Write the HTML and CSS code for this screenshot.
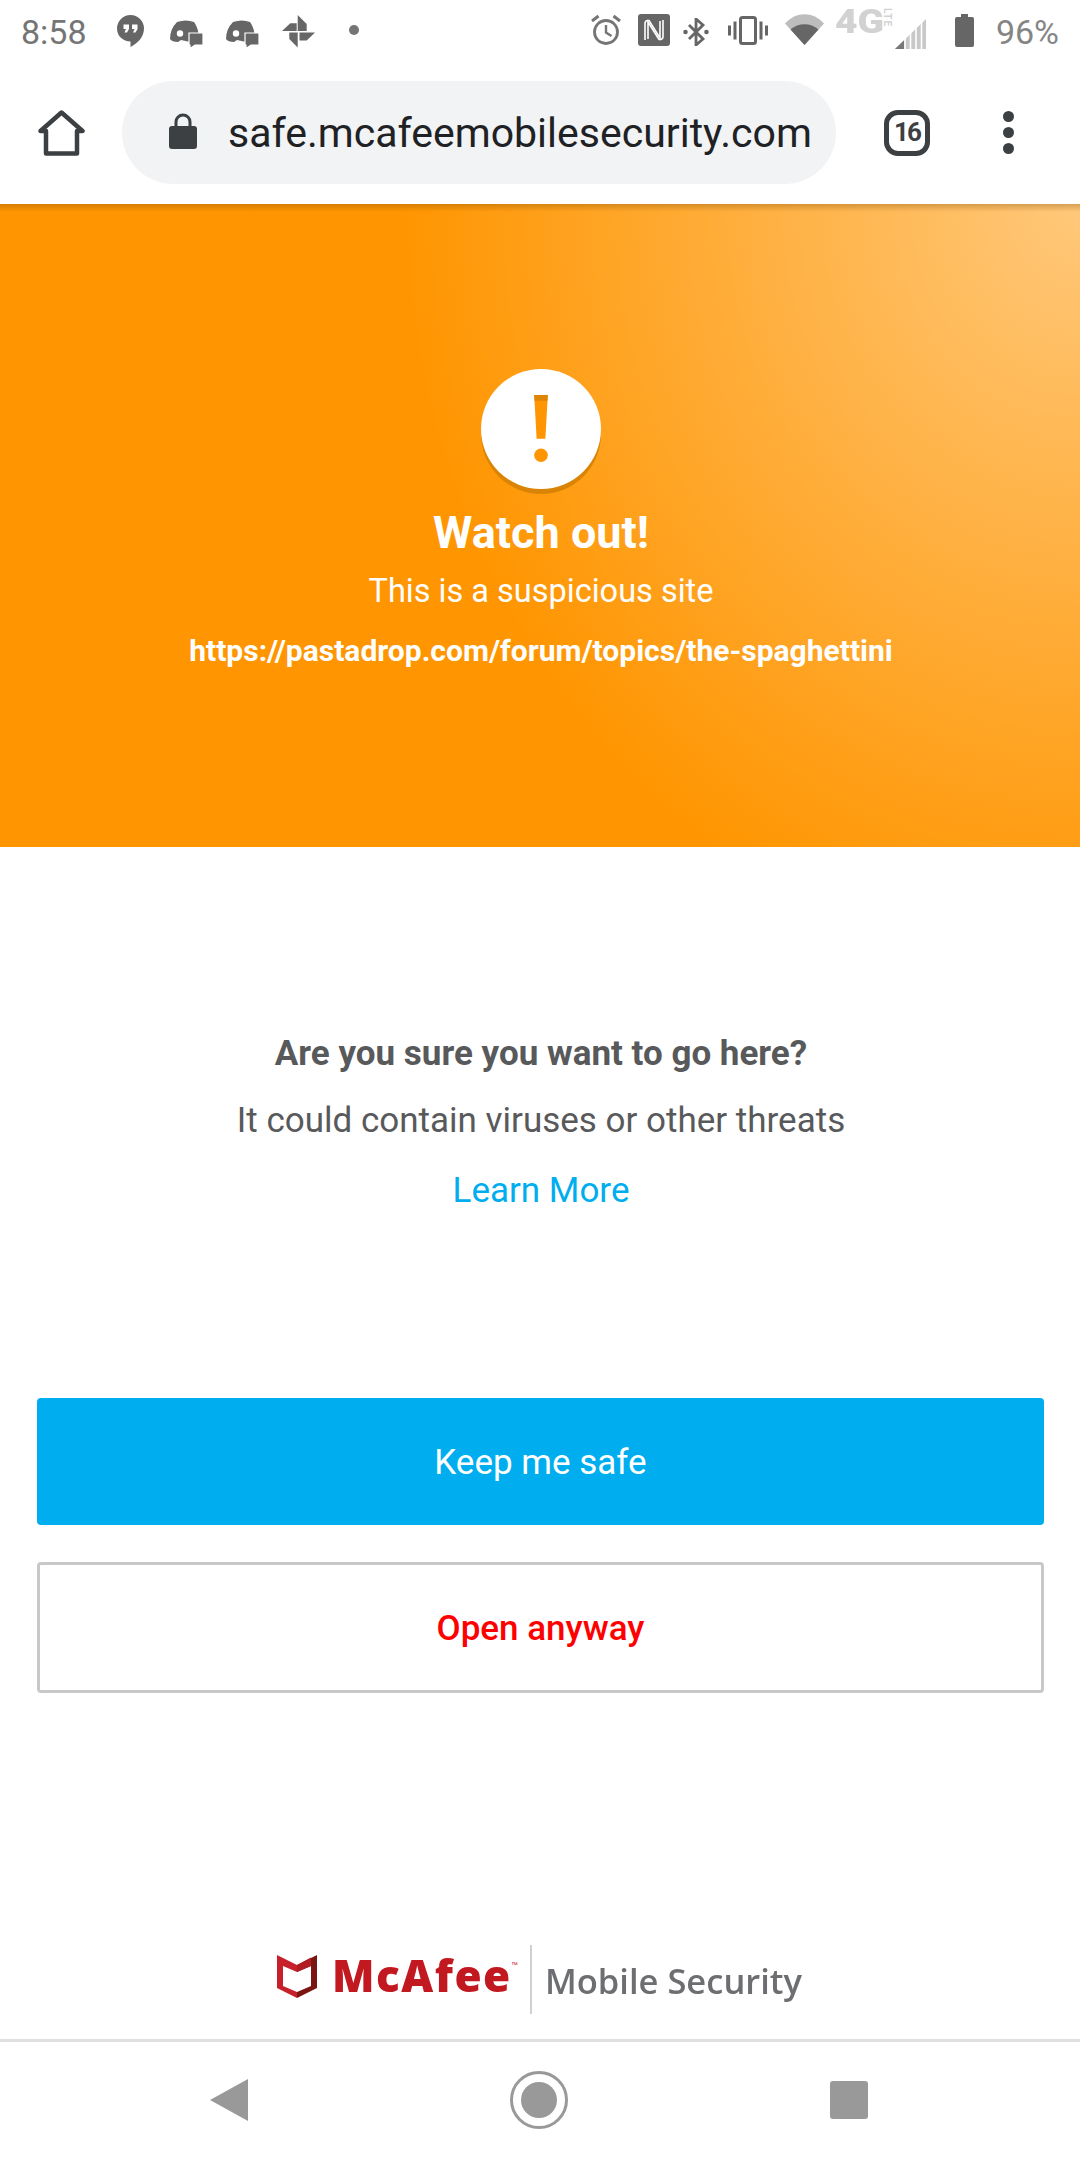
FILE: index.html
```html
<!DOCTYPE html>
<html lang="en">
<head>
    <meta charset="UTF-8">
    <meta name="viewport" content="width=device-width, initial-scale=1.0">
    <title>McAfee Mobile Security</title>
    <link rel="stylesheet" href="styles.css">
</head>
<body>
    <div class="status-bar">
        <span class="clock">8:58</span>
        <div class="notif-icons">
            <svg class="ic-hangouts" viewBox="0 0 27 32"><path d="M13.500 0a13.500 13.500 0 0 0-13.500 13.500c0 7.500 6 13 13.500 13V32c7-3.500 13.500-10 13.500-18.500A13.500 13.500 0 0 0 13.500 0z" fill="#666"/><path d="M6.500 9.500h5.500v4.500l-2 3.500H7.500l1.500-3.500H6.500zM15 9.500h5.500v4.500l-2 3.500H16l1.500-3.500H15z" fill="#fff"/></svg>
            <svg class="ic-discord" viewBox="0 0 33 28"><path d="M7 2Q16-1 24 2q3 4 4.500 11H20v9l-9-2-3 2q-6 0-8-3Q0 9 7 2z" fill="#666"/><circle cx="10" cy="13.500" r="3.200" fill="#fff"/><path d="M19 13h14v12h-8l-5 3.500V25h-1z" fill="#666" stroke="#fff" stroke-width="1.200"/></svg>
            <svg class="ic-discord" viewBox="0 0 33 28"><path d="M7 2Q16-1 24 2q3 4 4.500 11H20v9l-9-2-3 2q-6 0-8-3Q0 9 7 2z" fill="#666"/><circle cx="10" cy="13.500" r="3.200" fill="#fff"/><path d="M19 13h14v12h-8l-5 3.500V25h-1z" fill="#666" stroke="#fff" stroke-width="1.200"/></svg>
            <svg class="ic-pinwheel" viewBox="0 0 33 33"><path d="M15.700 0l9 9v7h-9zM17.500 17.500H33l-8.300 8h-7.200zM15.700 32.500l-8.400-8.500v-6.500h8.400zM0 16l8.300-7.700h6.400V16z" fill="#666"/></svg>
            <span class="notif-dot"></span>
        </div>
        <div class="system-icons">
            <svg class="ic-alarm" viewBox="0 0 30 32"><circle cx="15" cy="18" r="11.500" fill="none" stroke="#757575" stroke-width="2.800"/><path d="M15 11v7.500l5.500 3.500" fill="none" stroke="#757575" stroke-width="2.400"/><path d="M1 7l6.500-5M29 7l-6.500-5" stroke="#757575" stroke-width="3"/></svg>
            <svg class="ic-nfc" viewBox="0 0 32 32"><rect width="32" height="32" rx="3" fill="#666"/><path d="M7 26V9.500Q7 6.500 10 6.500h1L22 24V7" fill="none" stroke="#fff" stroke-width="1.600"/><path d="M25 6v16.500q0 3-3 3h-1L10 8v17" fill="none" stroke="#fff" stroke-width="1.600"/></svg>
            <svg class="ic-bt" viewBox="0 0 26 28"><path d="M6 7l14 14-7 6V1l7 6L6 21" fill="none" stroke="#666" stroke-width="2.800"/><circle cx="2.500" cy="14" r="2.300" fill="#666"/><circle cx="23.500" cy="14" r="2.300" fill="#666"/></svg>
            <svg class="ic-vibrate" viewBox="0 0 40 29"><rect x="12.500" y="1.500" width="15" height="26" rx="2" fill="none" stroke="#666" stroke-width="3"/><path d="M1.500 9.500v10M7 5.500v18M33 5.500v18M38.500 9.500v10" stroke="#666" stroke-width="3"/></svg>
            <svg class="ic-wifi" viewBox="0 0 39 31"><path d="M0 9.500C11-3 28-3 39 9.500L19.500 31z" fill="#bdbdbd"/><path d="M5.500 15.500c8-7 20-7 28 0L19.500 31z" fill="#666"/></svg>
            <div class="network">
                <span class="net-label">4G</span>
                <span class="net-lte">LTE</span>
                <svg class="ic-signal" viewBox="0 0 31 30"><path d="M0 30L31 0v30z" fill="#c8c8c8"/><path d="M0 30l9-8.700V30z" fill="#777"/><path d="M10 15v15M15.500 10v20M21 5v25M26.500 0v30" stroke="#fff" stroke-width="1.600"/></svg>
            </div>
            <svg class="ic-battery" viewBox="0 0 19 33"><path d="M6 0h7v3h4a2 2 0 0 1 2 2v26a2 2 0 0 1-2 2H2a2 2 0 0 1-2-2V5a2 2 0 0 1 2-2h4z" fill="#666"/></svg>
            <span class="battery-text">96%</span>
        </div>
    </div>

    <div class="toolbar">
        <svg class="ic-home" viewBox="0 0 47 46"><path d="M2.500 21L23.500 2.500 44.500 21H39v22.500H8V21z" fill="none" stroke="#3c4043" stroke-width="4.500" stroke-linejoin="round"/></svg>
        <div class="url-pill">
            <svg class="ic-lock" viewBox="0 0 28 36"><path d="M7 14V9a7 7 0 0 1 14 0v5" fill="none" stroke="#3c4043" stroke-width="3"/><rect y="13" width="28" height="23" rx="3" fill="#3c4043"/></svg>
            <span class="url-text">safe.mcafeemobilesecurity.com</span>
        </div>
        <div class="tab-count">16</div>
        <div class="menu-dots"><span></span><span></span><span></span></div>
    </div>

    <section class="hero">
        <div class="alert-circle">
            <svg class="ic-bang" viewBox="0 0 14 70"><path d="M0 0h14l-2.500 45h-9z" fill="#ff9500"/><path d="M0 0h14l-.3 6H.3z" fill="#de8504"/><circle cx="7" cy="62" r="7" fill="#ff9500"/></svg>
        </div>
        <h1>Watch out!</h1>
        <p class="hero-sub">This is a suspicious site</p>
        <p class="hero-url">https://pastadrop.com/forum/topics/the-spaghettini</p>
    </section>

    <main class="content">
        <h2>Are you sure you want to go here?</h2>
        <p class="warn">It could contain viruses or other threats</p>
        <a class="learn" href="#">Learn More</a>
    </main>

    <div class="actions">
        <button class="btn btn-safe">Keep me safe</button>
        <button class="btn btn-open">Open anyway</button>
    </div>

    <footer class="brand">
        <svg class="shield" viewBox="0 0 40 43"><path d="M0 0l20 10v7L6 11v20l14 6v6L0 33z" fill="#c8202a"/><path d="M40 0L20 10v7l14-6v20l-14 6v6l20-10z" fill="#7a1512"/><path d="M34 2.500L20 10v7l14-6z" fill="#b01c22"/></svg>
        <span class="brand-name">McAfee<sup>™</sup></span>
        <span class="brand-sep"></span>
        <span class="brand-product">Mobile Security</span>
    </footer>

    <nav class="nav-bar">
        <svg class="nav-back" viewBox="0 0 38 42"><path d="M38 0v42L0 21z" fill="#999"/></svg>
        <svg class="nav-home" viewBox="0 0 58 58"><circle cx="29" cy="29" r="27.500" fill="none" stroke="#999" stroke-width="3"/><circle cx="29" cy="29" r="18" fill="#999"/></svg>
        <span class="nav-recent"></span>
    </nav>
</body>
</html>
```

FILE: styles.css
```css
* {
    margin: 0;
    padding: 0;
    box-sizing: border-box;
}

body {
    width: 1080px;
    height: 2160px;
    overflow: hidden;
    font-family: 'Roboto', sans-serif;
    background-color: #ffffff;
    display: flex;
    flex-direction: column;
}

svg {
    display: block;
    flex-shrink: 0;
}

/* status bar */
.status-bar {
    height: 64px;
    display: flex;
    align-items: flex-start;
    padding: 0 21px;
    color: #757575;
}

.clock {
    font-size: 34px;
    line-height: 64px;
    width: 96px;
}

.notif-icons {
    display: flex;
    align-items: flex-start;
    padding-top: 15px;
}

.ic-hangouts { width: 27px; height: 32px; margin-right: 3px; }
.ic-discord { width: 33px; height: 28px; margin: 5px 0 0 23px; }
.ic-pinwheel { width: 33px; height: 33px; margin-left: 23px; }

.notif-dot {
    width: 10px;
    height: 10px;
    margin: 10px 0 0 34px;
    border-radius: 50%;
    background-color: #757575;
}

.system-icons {
    margin-left: auto;
    display: flex;
    align-items: flex-start;
}

.ic-alarm { width: 30px; height: 32px; margin-top: 14px; }
.ic-nfc { width: 32px; height: 32px; margin: 14px 0 0 17px; }
.ic-bt { width: 26px; height: 28px; margin: 18px 0 0 13px; }
.ic-vibrate { width: 40px; height: 29px; margin: 16px 0 0 19px; }
.ic-wifi { width: 39px; height: 31px; margin: 14px 0 0 17px; }

.network {
    width: 90px;
    margin-left: 12px;
    position: relative;
    display: flex;
    justify-content: flex-end;
}

.net-label {
    position: absolute;
    top: 5px;
    left: -1px;
    font-size: 33px;
    font-weight: 900;
    line-height: 33px;
    color: #d2d2d2;
    transform: scaleX(1.18);
    transform-origin: left;
}

.net-lte {
    position: absolute;
    top: 8px;
    left: 46px;
    font-size: 10px;
    font-weight: 700;
    line-height: 10px;
    letter-spacing: 1px;
    color: #d2d2d2;
    writing-mode: vertical-rl;
}

.ic-signal { width: 31px; height: 30px; margin-top: 19px; }
.ic-battery { width: 19px; height: 33px; margin: 14px 0 0 29px; }

.battery-text {
    font-size: 34px;
    line-height: 65px;
    margin-left: 22px;
    color: #858585;
}

/* browser toolbar */
.toolbar {
    height: 140px;
    display: flex;
    align-items: center;
    padding-left: 38px;
    background-color: #ffffff;
}

.ic-home { width: 47px; height: 46px; margin-top: -3px; }

.url-pill {
    width: 714px;
    height: 103px;
    margin: -3px 0 0 37px;
    border-radius: 52px;
    background-color: #f1f3f4;
    display: flex;
    align-items: center;
    padding-left: 47px;
}

.ic-lock { width: 28px; height: 36px; margin-top: -4px; }

.url-text {
    margin-left: 31px;
    font-size: 41px;
    color: #202124;
    white-space: nowrap;
}

.tab-count {
    width: 46px;
    height: 46px;
    margin: -3px 0 0 48px;
    border: 5px solid #3c4043;
    border-radius: 14px;
    color: #3c4043;
    font-size: 26px;
    font-weight: 700;
    letter-spacing: -2px;
    line-height: 35px;
    text-align: center;
}

.menu-dots {
    display: flex;
    flex-direction: column;
    gap: 5px;
    margin: -3px 0 0 73px;
}

.menu-dots span {
    width: 11px;
    height: 11px;
    border-radius: 50%;
    background-color: #3c4043;
}

/* orange banner */
.hero {
    height: 643px;
    background:
        linear-gradient(rgba(120, 70, 0, 0.3), rgba(120, 70, 0, 0) 8px),
        radial-gradient(680px 770px at 100% 0, #ffc87a 0%, #ff9500 100%);
    color: #ffffff;
    text-align: center;
    padding: 165px 0 0 2px;
}

.alert-circle {
    width: 120px;
    height: 120px;
    margin: 0 auto;
    border-radius: 50%;
    background-color: #ffffff;
    box-shadow: 0 5px 0 #d98404;
    display: flex;
    justify-content: center;
    padding-top: 26px;
}

.ic-bang { width: 14px; height: 68px; }

.hero h1 {
    font-size: 45px;
    font-weight: 700;
    line-height: 48px;
    margin-top: 20px;
}

.hero-sub {
    font-size: 32.500px;
    line-height: 40px;
    margin-top: 14px;
}

.hero-url {
    font-size: 30px;
    font-weight: 700;
    line-height: 36px;
    margin-top: 22px;
}

/* warning text */
.content {
    height: 551px;
    padding: 185px 0 0 2px;
    text-align: center;
    color: #58595b;
}

.content h2 {
    font-size: 35px;
    font-weight: 700;
    line-height: 44px;
}

.warn {
    font-size: 35px;
    line-height: 44px;
    margin-top: 23px;
}

.learn {
    display: block;
    font-size: 35px;
    line-height: 44px;
    margin-top: 26px;
    color: #00aeef;
    text-decoration: none;
}

/* buttons */
.actions {
    display: flex;
    flex-direction: column;
    gap: 37px;
    padding: 0 36px 0 37px;
}

.btn {
    width: 100%;
    font-family: inherit;
    font-size: 35px;
    border-radius: 4px;
    padding-top: 2px;
    cursor: pointer;
}

.btn-safe {
    height: 127px;
    border: none;
    background-color: #00aeef;
    color: #ffffff;
}

.btn-open {
    height: 131px;
    border: 3px solid #c8c8c8;
    background-color: #ffffff;
    color: #ff0000;
    font-weight: 500;
}

/* logo strip */
.brand {
    height: 346px;
    padding: 227px 0 0 277px;
    display: flex;
    align-items: center;
    filter: blur(0.7px);
}

.shield { width: 40px; height: 43px; margin-top: -6px; }

.brand-name {
    margin: -9px 0 0 15px;
    width: 198px;
    font-family: 'Open Sans', sans-serif;
    font-size: 44px;
    font-weight: 800;
    color: #c2181f;
    letter-spacing: 1.500px;
    line-height: 1;
}

.brand-name sup {
    font-size: 8px;
    font-weight: 400;
    letter-spacing: 0;
    vertical-align: 24px;
    line-height: 0;
}

.brand-sep {
    width: 2px;
    height: 69px;
    background-color: #d0d0d0;
}

.brand-product {
    margin: 1px 0 0 13px;
    font-family: 'Open Sans', sans-serif;
    font-size: 34.500px;
    font-weight: 600;
    color: #6d6e71;
}

/* android nav */
.nav-bar {
    flex: 1;
    border-top: 3px solid #e0e0e0;
    display: flex;
    align-items: center;
    padding: 0 212px 2px 210px;
    justify-content: space-between;
}

.nav-back { width: 38px; height: 42px; }
.nav-home { width: 58px; height: 58px; }

.nav-recent {
    width: 38px;
    height: 38px;
    border-radius: 3px;
    background-color: #999999;
}
```
